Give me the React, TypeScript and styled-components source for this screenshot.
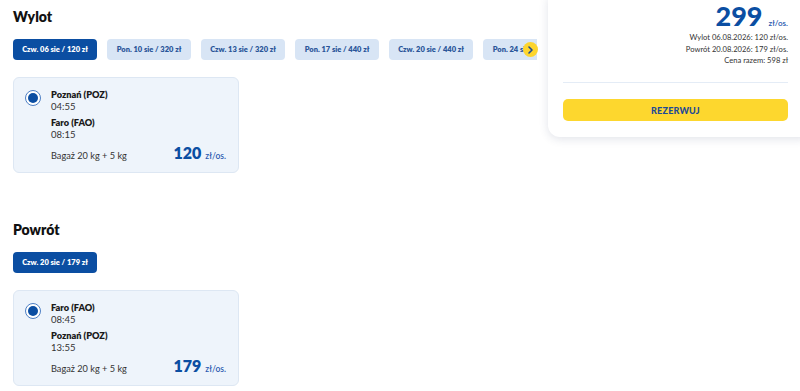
import React from 'react';
import styled, { createGlobalStyle } from 'styled-components';

const GlobalStyle = createGlobalStyle`
  html, body {
    margin: 0;
    padding: 0;
    background: #ffffff;
    overflow: hidden;
  }
  body {
    font-family: Lato, "Open Sans", "Liberation Sans", sans-serif;
    color: #1d1d1f;
  }
`;

const Page = styled.div`
  display: flex;
  width: 800px;
  height: 391px;
`;

const Main = styled.main`
  width: 524px;
  padding-left: 13px;
  flex-shrink: 0;
`;

const Section = styled.section`
  padding-top: 8px;
  & + & {
    margin-top: 40px;
  }
`;

const Title = styled.h2`
  margin: 0;
  font-size: 14px;
  line-height: 18px;
  font-weight: 800;
  color: #111;
`;

const StripWrap = styled.div`
  position: relative;
  margin-top: 13px;
`;

const Strip = styled.div`
  display: flex;
  gap: 10px;
  overflow: hidden;
`;

const Chip = styled.button<{ $active?: boolean }>`
  flex-shrink: 0;
  height: 21px;
  width: 84px;
  padding: 0;
  border: none;
  border-radius: 4px;
  font-family: inherit;
  font-size: 7.5px;
  font-weight: 800;
  white-space: nowrap;
  overflow: hidden;
  background: ${p => (p.$active ? '#0b4ea2' : '#d8e5f5')};
  color: ${p => (p.$active ? '#ffffff' : '#2a5599')};
`;

const Arrow = styled.span`
  position: absolute;
  right: -1px;
  top: 3px;
  width: 15px;
  height: 15px;
  border-radius: 50%;
  background: #fdd52e;
  display: flex;
  align-items: center;
  justify-content: center;
`;

const Card = styled.div`
  margin-top: 17px;
  width: 226px;
  box-sizing: border-box;
  background: #eef4fb;
  border: 1px solid #dde7f3;
  border-radius: 6px;
  padding: 11px 12px 7px 11px;
  display: flex;
  gap: 10px;
`;

const Radio = styled.span`
  flex-shrink: 0;
  width: 16px;
  height: 16px;
  box-sizing: border-box;
  border-radius: 50%;
  border: 1.5px solid #4d7fc4;
  background: #fff;
  display: flex;
  align-items: center;
  justify-content: center;
  margin-top: 1px;
  &::after {
    content: '';
    width: 10px;
    height: 10px;
    border-radius: 50%;
    background: #0b4ea2;
  }
`;

const Info = styled.div`
  flex: 1;
  display: flex;
  flex-direction: column;
`;

const Stop = styled.div`
  & + & {
    margin-top: 4px;
  }
`;

const Airport = styled.div`
  font-size: 9.2px;
  line-height: 12px;
  font-weight: 800;
  color: #1a1a1a;
`;

const Time = styled.div`
  font-size: 9.5px;
  line-height: 12px;
  color: #333;
`;

const Bottom = styled.div`
  display: flex;
  justify-content: space-between;
  align-items: baseline;
  margin-top: 3px;
  line-height: 17px;
`;

const Baggage = styled.span`
  font-size: 9.2px;
  color: #333;
`;

const Price = styled.span`
  font-size: 16px;
  font-weight: 800;
  color: #0b4ea2;
`;

const Unit = styled.span`
  font-size: 8.5px;
  font-weight: 600;
  color: #2a5ab0;
  margin-left: 4px;
`;

const Aside = styled.aside`
  margin-left: 11px;
  width: 264px;
  flex-shrink: 0;
`;

const Summary = styled.div`
  background: #fff;
  border-radius: 0 0 12px 12px;
  box-shadow: 0 2px 10px rgba(40, 60, 100, 0.14);
  padding: 5px 24px 16px 15px;
  margin-top: -4px;
`;

const Total = styled.div`
  text-align: right;
  line-height: 30px;
  margin-bottom: -6px;
`;

const TotalValue = styled.span`
  font-size: 27px;
  font-weight: 900;
  color: #0b4ea2;
`;

const TotalUnit = styled.span`
  font-size: 8px;
  font-weight: 600;
  color: #2a5ab0;
  margin-left: 6px;
`;

const Line = styled.div`
  text-align: right;
  font-size: 7.6px;
  line-height: 11.5px;
  color: #333;
`;

const Divider = styled.hr`
  border: none;
  border-top: 1px solid #e4ecf6;
  margin: 15px 0 15px;
`;

const Book = styled.button`
  width: 100%;
  height: 22px;
  border: none;
  border-radius: 5px;
  background: #fdd72e;
  color: #1d4a95;
  font-family: inherit;
  font-size: 9px;
  font-weight: 900;
  letter-spacing: 0.2px;
`;

const outDates = [
  'Czw. 06 sie / 120 zł',
  'Pon. 10 sie / 320 zł',
  'Czw. 13 sie / 320 zł',
  'Pon. 17 sie / 440 zł',
  'Czw. 20 sie / 440 zł',
  'Pon. 24 sie / 440 zł',
];

type Leg = { from: string; dep: string; to: string; arr: string; price: number };

function FlightCard({ leg }: { leg: Leg }) {
  return (
    <Card>
      <Radio />
      <Info>
        <Stop>
          <Airport>{leg.from}</Airport>
          <Time>{leg.dep}</Time>
        </Stop>
        <Stop>
          <Airport>{leg.to}</Airport>
          <Time>{leg.arr}</Time>
        </Stop>
        <Bottom>
          <Baggage>Bagaż 20 kg + 5 kg</Baggage>
          <span>
            <Price>{leg.price}</Price>
            <Unit>zł/os.</Unit>
          </span>
        </Bottom>
      </Info>
    </Card>
  );
}

export default function App() {
  return (
    <>
      <GlobalStyle />
      <Page>
        <Main>
          <Section>
            <Title>Wylot</Title>
            <StripWrap>
              <Strip>
                {outDates.map((d, i) => (
                  <Chip key={d} $active={i === 0}>{d}</Chip>
                ))}
              </Strip>
              <Arrow>
                <svg width="7" height="8" viewBox="0 0 7 8">
                  <path d="M2 1 L5 4 L2 7" fill="none" stroke="#1d4a95" strokeWidth="1.6" strokeLinecap="round" strokeLinejoin="round" />
                </svg>
              </Arrow>
            </StripWrap>
            <FlightCard leg={{ from: 'Poznań (POZ)', dep: '04:55', to: 'Faro (FAO)', arr: '08:15', price: 120 }} />
          </Section>
          <Section>
            <Title>Powrót</Title>
            <StripWrap>
              <Strip>
                <Chip $active>Czw. 20 sie / 179 zł</Chip>
              </Strip>
            </StripWrap>
            <FlightCard leg={{ from: 'Faro (FAO)', dep: '08:45', to: 'Poznań (POZ)', arr: '13:55', price: 179 }} />
          </Section>
        </Main>
        <Aside>
          <Summary>
            <Total>
              <TotalValue>299</TotalValue>
              <TotalUnit>zł/os.</TotalUnit>
            </Total>
            <Line>Wylot 06.08.2026: 120 zł/os.</Line>
            <Line>Powrót 20.08.2026: 179 zł/os.</Line>
            <Line>Cena razem: 598 zł</Line>
            <Divider />
            <Book>REZERWUJ</Book>
          </Summary>
        </Aside>
      </Page>
    </>
  );
}
